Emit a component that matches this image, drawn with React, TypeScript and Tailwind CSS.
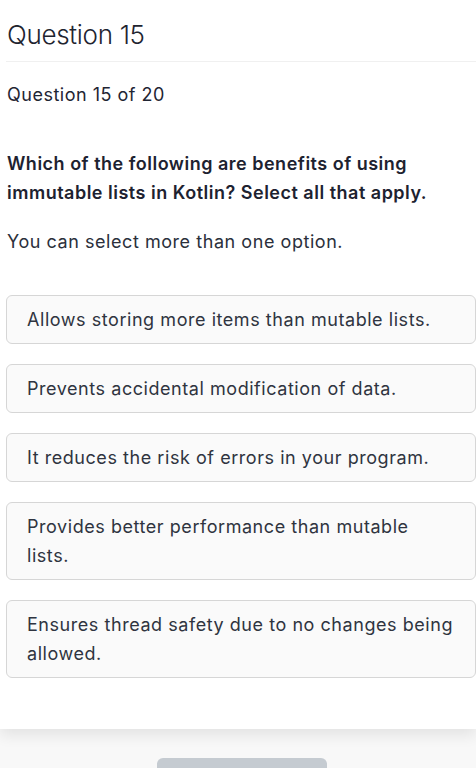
const OPTIONS = [
  "Allows storing more items than mutable lists.",
  "Prevents accidental modification of data.",
  "It reduces the risk of errors in your program.",
  "Provides better performance than mutable lists.",
  "Ensures thread safety due to no changes being allowed.",
];

export default function App() {
  return (
    <div className="min-h-screen bg-[#f8f8f8] font-['Inter',sans-serif] overflow-hidden">
      <section className="bg-white pl-[6px] pb-[51px] pt-[18px] shadow-[0_6px_14px_rgba(0,0,0,0.09)]">
        <h2 className="border-b border-[#f0f0f0] pl-[1px] pb-[9px] text-[26px] font-light leading-[34px] tracking-[-0.3px] text-[#1e2430]">
          Question 15
        </h2>

        <p className="mt-[19px] pl-[1px] text-[18px] leading-[28px] tracking-[0.5px] text-[#1f2533]">Question 15 of 20</p>

        <h3 className="mt-[40px] pl-[1px] pr-[40px] text-[18px] font-semibold leading-[29px] tracking-[0.5px] text-[#1d2230]">
          Which of the following are benefits of using immutable lists in Kotlin? Select all that apply.
        </h3>

        <p className="mt-[21px] pl-[1px] text-[18px] leading-[28px] tracking-[0.55px] text-[#2b303b]">
          You can select more than one option.
        </p>

        <div className="mt-[39px] flex flex-col gap-5">
          {OPTIONS.map((opt) => (
            <button
              key={opt}
              className="w-full rounded-[6px] border border-[#d6d6d6] bg-[#fafafa] py-[9px] pl-[20px] pr-[21px] text-left text-[18px] leading-[29px] tracking-[0.55px] text-[#2f3440]"
            >
              {opt}
            </button>
          ))}
        </div>
      </section>

      <div className="flex justify-center pl-[8px] pt-[29px]">
        <div className="h-[40px] w-[170px] rounded-[6px] bg-[#c5cbd1]" />
      </div>
    </div>
  );
}
